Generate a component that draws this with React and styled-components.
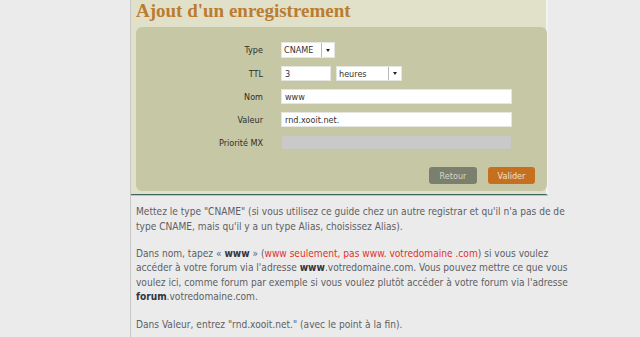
import React from "react";
import styled, { createGlobalStyle } from "styled-components";

const Global = createGlobalStyle`
  html, body { margin: 0; padding: 0; background: #ebebeb; }
  body { font-family: "DejaVu Sans", "Liberation Sans", sans-serif; }
  #root { min-height: 337px; }
`;

const Page = styled.div`
  display: flex;
  min-height: 337px;
  background: #ebebeb;
`;

const Gutter = styled.div`
  width: 130px;
  flex: none;
`;

const Main = styled.main`
  flex: 1;
  border-left: 1px solid #c9c9c9;
  min-height: 337px;
`;

const Shot = styled.section`
  width: 417px;
  box-sizing: border-box;
  background: #e1e1ca;
  padding: 0 1px 3px 5px;
  border-right: 2px solid #f4f4ee;
  border-bottom: 1px solid #3f6660;
  box-shadow: 0 1px 0 #a8d2c6;
`;

const Title = styled.h1`
  margin: 0;
  padding-bottom: 6px;
  font-family: "Liberation Serif", "DejaVu Serif", serif;
  font-weight: bold;
  font-size: 19px;
  line-height: 21px;
  color: #bb7c2f;
  white-space: nowrap;
`;

const Panel = styled.div`
  width: 411px;
  height: 164px;
  box-sizing: border-box;
  background: #c6c7a5;
  border-radius: 6px;
  padding: 15px 12px 0 0;
  display: flex;
  flex-direction: column;
`;

const Form = styled.div`
  display: grid;
  grid-template-columns: 127px 1fr;
  column-gap: 18px;
  row-gap: 8px;
  align-items: center;
`;

const Label = styled.label`
  text-align: right;
  font-size: 9px;
  font-stretch: condensed;
  color: #2e2e2a;
  white-space: nowrap;
`;

const FieldLine = styled.div`
  display: flex;
  gap: 5px;
  align-items: center;
`;

const TextBox = styled.input`
  box-sizing: border-box;
  width: ${(p) => p.$w}px;
  height: 15px;
  margin: 0;
  padding: 1px 0 0 3px;
  border: 1px solid ${(p) => (p.disabled ? "#c2c2c2" : "#e6e6e0")};
  background: ${(p) => (p.disabled ? "#c9c9c9" : "#ffffff")};
  font-family: "DejaVu Sans", sans-serif;
  font-stretch: condensed;
  font-size: 9px;
  color: #333;
  outline: none;
`;

const SelectBox = styled.div`
  box-sizing: border-box;
  width: ${(p) => p.$w}px;
  height: ${(p) => p.$h}px;
  display: flex;
  background: #fff;
  border: 1px solid #e6e6e0;
`;

const SelectValue = styled.span`
  flex: 1;
  padding-left: 2px;
  font-size: 9px;
  font-stretch: condensed;
  color: #333;
  display: flex;
  align-items: center;
  white-space: nowrap;
`;

const ArrowCell = styled.span`
  width: 12px;
  flex: none;
  border-left: 1px solid #b9b9b4;
  display: flex;
  align-items: center;
  justify-content: center;
  &::after {
    content: "";
    border-left: 2.5px solid transparent;
    border-right: 2.5px solid transparent;
    border-top: 3px solid #222;
  }
`;

const Buttons = styled.div`
  margin-top: 17px;
  display: flex;
  justify-content: flex-end;
  gap: 11px;
`;

const Button = styled.button`
  box-sizing: border-box;
  width: ${(p) => p.$w}px;
  height: 17px;
  border: none;
  border-radius: 3px;
  padding: 0;
  background: ${(p) => (p.$primary ? "#c6701f" : "#7b7f6e")};
  color: ${(p) => (p.$primary ? "#f3e2cc" : "#d4d6cc")};
  font-family: "DejaVu Sans", sans-serif;
  font-stretch: condensed;
  font-size: 9px;
`;

const Text = styled.div`
  margin: 10px 0 0 5px;
  font-family: "DejaVu Sans", sans-serif;
  font-stretch: condensed;
  font-size: 10.1px;
  line-height: 14.6px;
  color: #5e5f63;
`;

const Para = styled.p`
  margin: 0 0 12.5px;
  white-space: nowrap;
`;

const Strong = styled.b`
  color: #33343a;
`;

const Red = styled.span`
  color: #e0322c;
`;

function Select({ value, w, h }) {
  return (
    <SelectBox $w={w} $h={h}>
      <SelectValue>{value}</SelectValue>
      <ArrowCell />
    </SelectBox>
  );
}

export default function App() {
  return (
    <Page>
      <Global />
      <Gutter />
      <Main>
        <Shot>
          <Title>Ajout d'un enregistrement</Title>
          <Panel>
            <Form>
              <Label>Type</Label>
              <Select value="CNAME" w={54} h={16} />
              <Label>TTL</Label>
              <FieldLine>
                <TextBox $w={50} defaultValue="3" readOnly />
                <Select value="heures" w={66} h={15} />
              </FieldLine>
              <Label>Nom</Label>
              <TextBox $w={231} defaultValue="www" readOnly />
              <Label>Valeur</Label>
              <TextBox $w={231} defaultValue="rnd.xooit.net." readOnly />
              <Label>Priorité MX</Label>
              <TextBox $w={231} disabled />
            </Form>
            <Buttons>
              <Button $w={48}>Retour</Button>
              <Button $w={47} $primary>
                Valider
              </Button>
            </Buttons>
          </Panel>
        </Shot>
        <Text>
          <Para>
            Mettez le type "CNAME" (si vous utilisez ce guide chez un autre registrar et qu'il n'a pas de de
            <br />
            type CNAME, mais qu'il y a un type Alias, choisissez Alias).
          </Para>
          <Para>
            Dans nom, tapez « <Strong>www</Strong> » (<Red>www seulement, pas www. votredomaine .com</Red>) si vous voulez
            <br />
            accéder à votre forum via l'adresse <Strong>www</Strong>.votredomaine.com. Vous pouvez mettre ce que vous
            <br />
            voulez ici, comme forum par exemple si vous voulez plutôt accéder à votre forum via l'adresse
            <br />
            <Strong>forum</Strong>.votredomaine.com.
          </Para>
          <Para>Dans Valeur, entrez "rnd.xooit.net." (avec le point à la fin).</Para>
        </Text>
      </Main>
    </Page>
  );
}
